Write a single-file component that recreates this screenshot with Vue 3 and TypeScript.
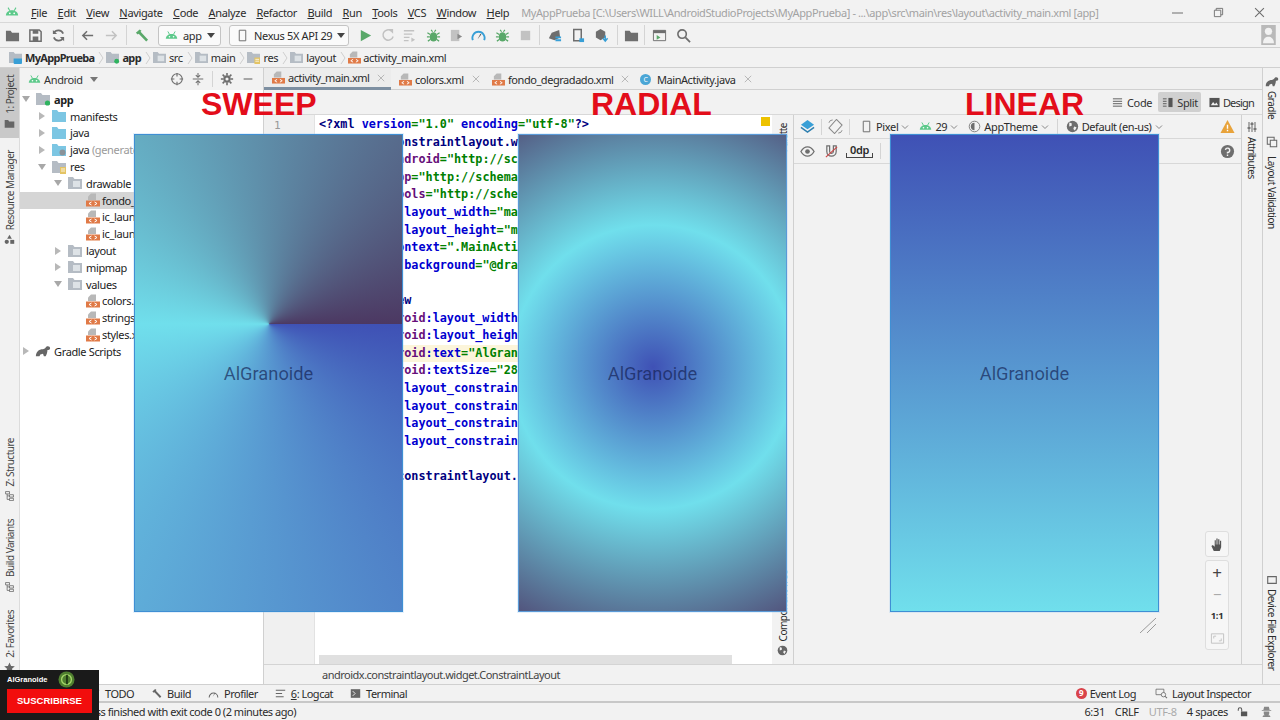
<script setup lang="ts">
type Seg = [string, string]
const menus = ['File','Edit','View','Navigate','Code','Analyze','Refactor','Build','Run','Tools','VCS','Window','Help']

const tb = [
  { i:'folder', c:'c-gray', w:23 }, { i:'save', c:'c-gray', w:23 }, { i:'sync', c:'c-gray', w:23 }, { sep:true, w:6 },
  { i:'left', c:'c-gray', w:23 }, { i:'right', c:'c-light', w:24 }, { sep:true, w:6 }, { i:'hammer', c:'c-green', w:24 },
]
const tb2 = [
  { i:'play', c:'c-green', w:22 }, { i:'rerun', c:'c-light', w:22 }, { i:'lines', c:'c-light', w:23 }, { i:'bug', c:'c-green', w:24 },
  { i:'attach', c:'c-light', w:22 }, { i:'gauge', c:'c-blue', w:23 }, { i:'bug', c:'c-green', w:24 }, { i:'stop', c:'c-light', w:22 },
  { sep:true, w:7 }, { i:'sdk', c:'c-gray', w:23 }, { i:'phone', c:'c-gray', w:23 }, { i:'box', c:'c-gray', w:25 },
  { sep:true, w:7 }, { i:'folder', c:'c-gray', w:20 }, { sep:true, w:7 }, { i:'terminal', c:'c-gray', w:22 }, { i:'search', c:'c-gray', w:26 },
]
const crumbs = [
  { t:'MyAppPrueba', b:true, ic:'proj' }, { t:'app', b:true, ic:'mod' }, { t:'src', b:false, ic:'gfold' },
  { t:'main', b:false, ic:'gfold' }, { t:'res', b:false, ic:'res' }, { t:'layout', b:false, ic:'gfold' },
]

const tabs = [
  { t:'activity_main.xml', w:127, act:true, ic:'xml' },
  { t:'colors.xml', w:93, act:false, ic:'xml' },
  { t:'fondo_degradado.xml', w:154, act:false, ic:'xml' },
  { t:'MainActivity.java', w:120, act:false, ic:'java' },
]

const tree = [
  { t:'app', lv:0, ar:'d', ic:'mod', b:true }, { t:'manifests', lv:1, ar:'r', ic:'fold' }, { t:'java', lv:1, ar:'r', ic:'fold' },
  { t:'java', note:' (generated)', lv:1, ar:'r', ic:'gen' }, { t:'res', lv:1, ar:'d', ic:'res' }, { t:'drawable', lv:2, ar:'d', ic:'gfold' },
  { t:'fondo_degradado.xml', lv:3, ic:'xml', sel:true }, { t:'ic_launcher_background.xml', lv:3, ic:'xml' }, { t:'ic_launcher_foreground.xml', lv:3, ic:'xml' },
  { t:'layout', lv:2, ar:'r', ic:'gfold' }, { t:'mipmap', lv:2, ar:'r', ic:'gfold' }, { t:'values', lv:2, ar:'d', ic:'gfold' },
  { t:'colors.xml', lv:3, ic:'xml' }, { t:'strings.xml', lv:3, ic:'xml' }, { t:'styles.xml', lv:3, ic:'xml' }, { t:'Gradle Scripts', lv:0, ar:'r', ic:'gradle' },
]

const T='t', A='a', P='p', S='s', X='x'
const attr = (ind: string, ns: string, name: string, val: string): Seg[] => [[ind,X],[ns,P],[':',A],[name,A],['=',S],['"'+val+'"',S]]
const full: Seg[][] = [
  [['<?',T],['xml ',T],['version',A],['=',S],['"1.0" ',S],['encoding',A],['=',S],['"utf-8"',S],['?>',T]],
  [['<androidx.constraintlayout.widget.ConstraintLayout',T]],
  [['    ',X],['xmlns',A],[':',A],['android',P],['=',S],['"http://schemas.android.com/apk/res/android"',S]],
  [['    ',X],['xmlns',A],[':',A],['app',P],['=',S],['"http://schemas.android.com/apk/res-auto"',S]],
  [['    ',X],['xmlns',A],[':',A],['tools',P],['=',S],['"http://schemas.android.com/tools"',S]],
  attr('    ','android','layout_width','match_parent'),
  attr('    ','android','layout_height','match_parent'),
  attr('    ','tools','context','.MainActivity'),
  attr('    ','android','background','@drawable/fondo_degradado'),
  [[' ',X]],
  [['    <TextView',T]],
  attr('        ','android','layout_width','wrap_content'),
  attr('        ','android','layout_height','wrap_content'),
  attr('        ','android','text','AlGranoide'),
  attr('        ','android','textSize','28sp'),
  attr('        ','app','layout_constraintBottom_toBottomOf','parent'),
  attr('        ','app','layout_constraintLeft_toLeftOf','parent'),
  attr('        ','app','layout_constraintRight_toRightOf','parent'),
  attr('        ','app','layout_constraintTop_toTopOf','parent'),
  [[' ',X]],
  [['</androidx.constraintlayout.widget.ConstraintLayout>',T]],
]
// Everything past column 28 sits behind the RADIAL preview, so it is not laid out.
const clip = (segs: Seg[], max = 28): Seg[] => {
  const out: Seg[] = []
  let left = max
  for (const [txt, k] of segs) {
    if (left <= 0) break
    out.push([txt.slice(0, left), k])
    left -= txt.length
  }
  return out
}
const code = full.map((segs, i) => ({ segs: i === 0 ? segs : clip(segs), hl: i === 13 }))

const leftTop = [
  { t:'1: Project', ic:'folder', act:true },
  { t:'Resource Manager', ic:'shapes' },
]
const leftBottom = [
  { t:'Z: Structure', ic:'tree' },
  { t:'Build Variants', ic:'tree' },
  { t:'2: Favorites', ic:'star' },
]
const phones = [
  { k:'sweep', label:'SWEEP' },
  { k:'radial', label:'RADIAL' },
  { k:'linear', label:'LINEAR' },
]
</script>

<template>
  <div class="ide">
    <svg class="sprite" aria-hidden="true">
      <defs>
        <symbol id="android" viewBox="0 0 16 16"><path d="M1 12c0-3.400 3-6 7-6s7 2.600 7 6z" fill="currentColor"/><path d="M3.500 3l2 3.500M12.500 3l-2 3.500" stroke="currentColor" stroke-width="1.200"/><circle cx="5.500" cy="9.500" r="1" fill="#fff"/><circle cx="10.500" cy="9.500" r="1" fill="#fff"/></symbol>
        <symbol id="folder" viewBox="0 0 16 16"><path d="M1 3h5l1.500 2H15v9H1z" fill="currentColor"/></symbol>
        <symbol id="save" viewBox="0 0 16 16"><path d="M2 2h10l2 2v10H2z" fill="none" stroke="currentColor" stroke-width="1.600"/><path d="M5 2h6v4H5zM5 9h6v5H5z" fill="currentColor"/></symbol>
        <symbol id="sync" viewBox="0 0 16 16"><path d="M13 6a5.500 5.500 0 0 0-10-.5M3 10a5.500 5.500 0 0 0 10 .5" fill="none" stroke="currentColor" stroke-width="1.800"/><path d="M2 2v4.500h4.500zM14 14V9.500H9.500z" fill="currentColor"/></symbol>
        <symbol id="left" viewBox="0 0 16 16"><path d="M14 8H3M7.500 3.500L3 8l4.500 4.500" fill="none" stroke="currentColor" stroke-width="1.600"/></symbol>
        <symbol id="right" viewBox="0 0 16 16"><path d="M2 8h11M8.500 3.500L13 8l-4.500 4.500" fill="none" stroke="currentColor" stroke-width="1.600"/></symbol>
        <symbol id="hammer" viewBox="0 0 16 16"><path d="M2 5l4-3.500 2 1.500-1 1 8 8.500-2 2-8-8.500-1 1z" fill="currentColor"/></symbol>
        <symbol id="play" viewBox="0 0 16 16"><path d="M3 2l11 6-11 6z" fill="currentColor"/></symbol>
        <symbol id="rerun" viewBox="0 0 16 16"><path d="M12 3a5.500 5.500 0 1 0 2 6" fill="none" stroke="currentColor" stroke-width="1.600"/><path d="M9 1h5v5z" fill="currentColor"/></symbol>
        <symbol id="lines" viewBox="0 0 16 16"><path d="M2 3h11M2 6.500h9M2 10h6M2 13.500h5" stroke="currentColor" stroke-width="1.500"/><path d="M10 10l4 2.500-4 2.500z" fill="currentColor"/></symbol>
        <symbol id="bug" viewBox="0 0 16 16"><ellipse cx="8" cy="9.500" rx="4" ry="5" fill="currentColor"/><path d="M1.500 5l3 2M14.500 5l-3 2M1 9.500h3M15 9.500h-3M2 14l3-2M14 14l-3-2M5.500 2l1.500 2M10.500 2L9 4" stroke="currentColor" stroke-width="1.300"/></symbol>
        <symbol id="attach" viewBox="0 0 16 16"><path d="M2 2h9v12H2z" fill="currentColor"/><path d="M9 6l5 3-5 3z" fill="#8a8a8a"/></symbol>
        <symbol id="gauge" viewBox="0 0 16 16"><path d="M2 13a6.500 6.500 0 1 1 12 0" fill="none" stroke="currentColor" stroke-width="2"/><path d="M7 12l3-6 1 1z" fill="#555"/></symbol>
        <symbol id="stop" viewBox="0 0 16 16"><path d="M3 3h10v10H3z" fill="currentColor"/></symbol>
        <symbol id="sdk" viewBox="0 0 16 16"><path d="M2 11l3-6 8-3 1 8-6 3z" fill="#6e6e6e"/><path d="M9 9h6v2H9zM9 12h6v2H9z" fill="#389fd6"/></symbol>
        <symbol id="phone" viewBox="0 0 16 16"><path d="M4 1.500h8v12H4z" fill="none" stroke="#6e6e6e" stroke-width="1.600"/><path d="M10 11h5v4h-5z" fill="#389fd6"/></symbol>
        <symbol id="box" viewBox="0 0 16 16"><path d="M2 4l5-3 5 3v6l-5 3-5-3z" fill="#6e6e6e"/><path d="M12 8v5M9.500 11l2.500 3 2.500-3" stroke="#389fd6" stroke-width="1.600" fill="none"/></symbol>
        <symbol id="terminal" viewBox="0 0 16 16"><path d="M1.500 2.500h13v11h-13z" fill="none" stroke="currentColor"/><path d="M1.500 2.500h13v3h-13z" fill="currentColor"/><path d="M5 7.500l4 2.500-4 2.500z" fill="#59a869"/></symbol>
        <symbol id="search" viewBox="0 0 16 16"><circle cx="6.500" cy="6.500" r="4.500" fill="none" stroke="currentColor" stroke-width="1.700"/><path d="M10 10l5 5" stroke="currentColor" stroke-width="1.900"/></symbol>
        <symbol id="x" viewBox="0 0 10 10"><path d="M1 1l8 8M9 1l-8 8" stroke="currentColor" stroke-width="1"/></symbol>
        <symbol id="chev" viewBox="0 0 8 8"><path d="M1 2.500l3 3 3-3" fill="none" stroke="currentColor" stroke-width="1"/></symbol>
        <symbol id="down" viewBox="0 0 8 8"><path d="M0 2h8L4 7z" fill="currentColor"/></symbol>
        <symbol id="xml" viewBox="0 0 14 14"><path d="M5 0.500h5v6.500H2V3.500z" fill="#b8b8b8"/><path d="M0 7.500h14v6H0z" fill="#e07a47"/><path d="M5.500 9L3 10.500 5.500 12M8.500 9l2.500 1.500L8.500 12" fill="none" stroke="#fff" stroke-width="1"/></symbol>
        <symbol id="fold" viewBox="0 0 16 14"><path d="M1 1h5l1.500 2H15v10H1z" fill="#7cc6e3"/></symbol>
        <symbol id="gfold" viewBox="0 0 16 14"><path d="M1 1h5l1.500 2H15v10H1z" fill="#b5bcc4"/><path d="M6 5h7v6H6z" fill="#dde2e6"/></symbol>
        <symbol id="proj" viewBox="0 0 16 14"><path d="M1 1h5l1.500 2H15v10H1z" fill="#b5bcc4"/><path d="M6 8h9v5a1 1 0 0 1-1 1H7a1 1 0 0 1-1-1z" fill="#389fd6"/></symbol>
        <symbol id="mod" viewBox="0 0 16 14"><path d="M1 1h5l1.500 2H15v10H1z" fill="#b5bcc4"/><circle cx="12.500" cy="11" r="2.600" fill="#2fb35f"/></symbol>
        <symbol id="gen" viewBox="0 0 16 14"><path d="M1 1h5l1.500 2H15v10H1z" fill="#7cc6e3"/><circle cx="11.500" cy="9.500" r="3" fill="#8a9399"/></symbol>
        <symbol id="res" viewBox="0 0 16 14"><path d="M1 1h5l1.500 2H15v10H1z" fill="#b5bcc4"/><path d="M9 7h6v7H9z" fill="#e4c464"/><path d="M10 9h4M10 11h4" stroke="#fff" stroke-width=".8"/></symbol>
        <symbol id="gradle" viewBox="0 0 18 14"><path d="M1 13c0-5 3-8 8-8 2 0 3-2 4-3 2-1 4 0 4 2s-2 2-3 2c0 3-1 5-2 7h-2l-1-3-3 1-1 2H3z" fill="currentColor"/></symbol>
        <symbol id="layers" viewBox="0 0 16 16"><path d="M8 1l7 5-7 5-7-5z" fill="#389fd6"/><path d="M1 9l7 5 7-5" fill="none" stroke="#2f80b0" stroke-width="1.700"/></symbol>
        <symbol id="rotate" viewBox="0 0 16 16"><path d="M9 .500l6 6-8 9-6-6z" fill="none" stroke="#888" stroke-width="1.100"/><path d="M1 4a4 4 0 0 1 4-3M15 12a4 4 0 0 1-4 3" fill="none" stroke="#888"/></symbol>
        <symbol id="dev" viewBox="0 0 16 16"><path d="M4 1.500h8v13H4z" fill="none" stroke="currentColor" stroke-width="1.200"/></symbol>
        <symbol id="theme" viewBox="0 0 16 16"><circle cx="8" cy="8" r="6.500" fill="none" stroke="currentColor"/><path d="M8 3.500a4.500 4.500 0 0 0 0 9z" fill="currentColor"/></symbol>
        <symbol id="globe" viewBox="0 0 16 16"><circle cx="8" cy="8" r="7" fill="currentColor"/><path d="M4 3l3 1 0 3-3 1zM10 8l3 1-2 4-2-2z" fill="#f2f2f2"/></symbol>
        <symbol id="warn" viewBox="0 0 16 16"><path d="M8 1l7.500 14H.500z" fill="#e8a33b"/><path d="M8 6v4.500M8 11.500v1.500" stroke="#fff" stroke-width="1.500"/></symbol>
        <symbol id="eye" viewBox="0 0 16 16"><path d="M1 8c2-3.500 4.500-5 7-5s5 1.500 7 5c-2 3.500-4.500 5-7 5s-5-1.500-7-5z" fill="none" stroke="currentColor" stroke-width="1.400"/><circle cx="8" cy="8" r="2.500" fill="currentColor"/></symbol>
        <symbol id="magnet" viewBox="0 0 16 16"><path d="M3 2v6a5 5 0 0 0 10 0V2h-3v6a2 2 0 0 1-4 0V2z" fill="none" stroke="currentColor" stroke-width="1.300"/><path d="M2 14L14 3" stroke="#c44" stroke-width="1.200"/></symbol>
        <symbol id="help" viewBox="0 0 16 16"><circle cx="8" cy="8" r="7" fill="currentColor"/><path d="M5.800 6.200A2.300 2.300 0 1 1 8 9v1M8 11.200v1.600" fill="none" stroke="#f2f2f2" stroke-width="1.500"/></symbol>
        <symbol id="hand" viewBox="0 0 16 16"><path d="M4 15L1.500 9.500l1.500-1 2 2V3.500h1.200V8h.6V1.500h1.300V8h.6V2.500h1.300V8h.6V4h1.300v7l-1.500 4z" fill="currentColor"/></symbol>
        <symbol id="fit" viewBox="0 0 16 16"><path d="M1.500 3h13v10h-13z" fill="none" stroke="currentColor"/><path d="M4 8V5.500h2.500M12 8v2.500H9.500" fill="none" stroke="currentColor"/></symbol>
        <symbol id="hlines" viewBox="0 0 12 12"><path d="M1 2h10M1 4.700h10M1 7.300h10M1 10h10" stroke="currentColor" stroke-width="1"/></symbol>
        <symbol id="split" viewBox="0 0 12 12"><path d="M1 2h4M1 4.700h4M1 7.300h4M1 10h4" stroke="currentColor" stroke-width="1"/><path d="M7 1h4.500v10H7z" fill="currentColor"/></symbol>
        <symbol id="image" viewBox="0 0 12 12"><path d="M.5 1h11v10H.5z" fill="currentColor"/><path d="M2 9l2.500-3.500L6.500 8 8 6l2 3z" fill="#f2f2f2"/></symbol>
        <symbol id="sliders" viewBox="0 0 12 12"><path d="M3 1v10M6 1v10M9 1v10" stroke="currentColor"/><path d="M1.500 7h3M4.500 3h3M7.500 8h3" stroke="currentColor" stroke-width="1.600"/></symbol>
        <symbol id="valid" viewBox="0 0 14 14"><path d="M1.500 1.500h8v8h-8z" fill="none" stroke="currentColor" stroke-width="1.200"/><path d="M5 5h7.500v7.500H5z" fill="#f2f2f2" stroke="currentColor" stroke-width="1.200"/></symbol>
        <symbol id="devf" viewBox="0 0 14 14"><path d="M2 3h10v8H2z" fill="none" stroke="currentColor" stroke-width="1.300"/></symbol>
        <symbol id="shapes" viewBox="0 0 14 14"><path d="M7 1l3 5H4z" fill="currentColor"/><circle cx="3.500" cy="10" r="2.700" fill="currentColor"/><path d="M8 7.500h5v5H8z" fill="currentColor"/></symbol>
        <symbol id="tree" viewBox="0 0 14 14"><path d="M2 2h5v3H2zM7 6h5v3H7zM7 10.500h5v3H7zM4 5v7h3M4 7.500h3" fill="none" stroke="currentColor"/></symbol>
        <symbol id="star" viewBox="0 0 14 14"><path d="M7 0.500l2 4.500 4.800.5-3.600 3.200 1 4.800L7 11l-4.200 2.500 1-4.800L.2 5.500 5 5z" fill="currentColor"/></symbol>
        <symbol id="prof" viewBox="0 0 14 14"><path d="M1.500 12a5.500 5.500 0 1 1 11 0" fill="none" stroke="currentColor" stroke-width="1.300"/><path d="M6 11l2.500-5 .8.800z" fill="currentColor"/></symbol>
        <symbol id="logcat" viewBox="0 0 14 14"><path d="M1 3h12M1 7h8M1 11h10" stroke="currentColor" stroke-width="1.300"/></symbol>
        <symbol id="term" viewBox="0 0 14 14"><path d="M1 1.500h12v11H1z" fill="currentColor"/><path d="M3.500 4l3 3-3 3" fill="none" stroke="#f2f2f2" stroke-width="1.200"/></symbol>
        <symbol id="insp" viewBox="0 0 16 14"><path d="M1 1.500h10v7H1z" fill="none" stroke="currentColor"/><circle cx="10.500" cy="8.500" r="2.800" fill="#f2f2f2" stroke="currentColor"/><path d="M12.500 10.500l2.500 2.500" stroke="currentColor" stroke-width="1.300"/></symbol>
        <symbol id="lock" viewBox="0 0 14 14"><path d="M5 13h8V7H5z" fill="currentColor"/><path d="M6 7V4.500a2.200 2.200 0 0 0-4.400 0V6" fill="none" stroke="currentColor" stroke-width="1.300"/></symbol>
        <symbol id="hat" viewBox="0 0 14 14"><path d="M3 5l1-4h6l1 4h2v1H1V5z" fill="currentColor"/><path d="M3.500 7h7v2a3 3 0 0 1-7 0zM2 14c0-2 2-3 5-3s5 1 5 3z" fill="currentColor"/></symbol>
        <symbol id="restore" viewBox="0 0 12 12"><path d="M1.500 3.500h7v7h-7zM3.500 3.500v-2h7v7h-2" fill="none" stroke="currentColor"/></symbol>
        <symbol id="user" viewBox="0 0 16 22"><path d="M0 0h16v22H0z" fill="#b9b9b9"/><circle cx="8" cy="7" r="4" fill="#f2f2f2"/><path d="M2 20c0-5 3-7 6-7s6 2 6 7z" fill="#f2f2f2"/></symbol>
      </defs>
    </svg>

    <header class="titlebar">
      <svg class="ic ic-android c-android"><use href="#android"/></svg>
      <nav class="menus"><span v-for="m in menus" :key="m" class="menu"><u>{{ m[0] }}</u>{{ m.slice(1) }}</span></nav>
      <span class="wintitle">MyAppPrueba [C:\Users\WILL\AndroidStudioProjects\MyAppPrueba] - ...\app\src\main\res\layout\activity_main.xml [app]</span>
      <span class="winctl">
        <svg class="ctl c-gray"><path d="M0 6h11" stroke="currentColor"/></svg>
        <svg class="ctl c-gray"><use href="#restore"/></svg>
        <svg class="ctl c-gray"><use href="#x"/></svg>
      </span>
    </header>

    <div class="toolbar">
      <template v-for="(b,i) in tb" :key="i">
        <span class="tcell" :style="{ width: b.w + 'px' }">
          <i v-if="b.sep" class="vsep"></i>
          <svg v-else class="ic" :class="b.c"><use :href="'#' + b.i"/></svg>
        </span>
      </template>
      <span class="combo combo-app"><svg class="ic-sm c-android"><use href="#android"/></svg><span>app</span><svg class="tri"><use href="#down"/></svg></span>
      <span class="combo combo-dev"><svg class="ic-sm c-gray"><use href="#dev"/></svg><span>Nexus 5X API 29</span><svg class="tri"><use href="#down"/></svg></span>
      <span class="tb2">
        <span v-for="(b,i) in tb2" :key="i" class="tcell" :style="{ width: b.w + 'px' }">
          <i v-if="b.sep" class="vsep"></i>
          <svg v-else class="ic" :class="b.c"><use :href="'#' + b.i"/></svg>
        </span>
      </span>
      <svg class="avatar"><use href="#user"/></svg>
    </div>

    <div class="navbar">
      <span v-for="c in crumbs" :key="c.t" class="crumb">
        <svg class="crumb-i"><use :href="'#' + c.ic"/></svg>
        <b v-if="c.b">{{ c.t }}</b><span v-else>{{ c.t }}</span>
        <svg class="crumb-sep" viewBox="0 0 6 14"><path d="M1 1l4 6-4 6" fill="none" stroke="#cfcfcf"/></svg>
      </span>
      <span class="crumb"><svg class="crumb-x"><use href="#xml"/></svg><span>activity_main.xml</span></span>
    </div>

    <div class="main">
      <aside class="lstrip">
        <div class="lgroup">
          <div v-for="l in leftTop" :key="l.t" class="vtab" :class="{ act: l.act, rm: !l.act }">
            <svg class="vic"><use :href="'#' + l.ic"/></svg><span class="vt-up">{{ l.t }}</span>
          </div>
        </div>
        <div class="lgroup lg2">
          <div v-for="l in leftBottom" :key="l.t" class="vtab">
            <svg class="vic"><use :href="'#' + l.ic"/></svg><span class="vt-up">{{ l.t }}</span>
          </div>
        </div>
      </aside>

      <section class="project">
        <div class="phead">
          <svg class="ic-sm c-android"><use href="#android"/></svg>
          <span class="ptitle">Android</span>
          <svg class="tri tri-g"><use href="#down"/></svg>
          <span class="pspacer"></span>
          <svg class="ic-h c-gray" viewBox="0 0 16 16"><circle cx="8" cy="8" r="6" fill="none" stroke="currentColor" stroke-width="1.300"/><path d="M8 1v4M8 11v4M1 8h4M11 8h4" stroke="currentColor" stroke-width="1.300"/></svg>
          <svg class="ic-h c-gray" viewBox="0 0 16 16"><path d="M2 8h12M8 1v4M5.500 3.500L8 6l2.500-2.500M8 15v-4M5.500 12.500L8 10l2.500 2.500" fill="none" stroke="currentColor" stroke-width="1.200"/></svg>
          <i class="vsep psep"></i>
          <svg class="ic-h c-gray" viewBox="0 0 16 16"><circle cx="8" cy="8" r="3" fill="none" stroke="currentColor" stroke-width="2.400"/><path d="M8 1v3M8 12v3M1 8h3M12 8h3M3 3l2 2M11 11l2 2M13 3l-2 2M5 11l-2 2" stroke="currentColor" stroke-width="1.800"/></svg>
          <svg class="ic-h c-gray" viewBox="0 0 16 16"><path d="M3 8h10" stroke="currentColor" stroke-width="1.300"/></svg>
        </div>
        <ul class="tree">
          <li v-for="n in tree" :key="n.t + n.ic + n.lv + (n.note || '')" class="row" :class="['lv' + n.lv, { sel: n.sel }]">
            <svg v-if="n.ar" class="arrow" viewBox="0 0 8 8"><path v-if="n.ar === 'd'" d="M0 1h8L4 7z" fill="#a8a8a8"/><path v-else d="M1 0v8l6-4z" fill="#b8b8b8"/></svg>
            <span v-else class="arrow"></span>
            <svg class="tic"><use :href="'#' + n.ic"/></svg>
            <span :class="{ bold: n.b }">{{ n.t }}<span v-if="n.note" class="note">{{ n.note }}</span></span>
          </li>
        </ul>
      </section>

      <section class="center">
        <div class="tabs">
          <div v-for="t in tabs" :key="t.t" class="tab" :class="{ act: t.act, jv: t.ic === 'java' }" :style="{ width: t.w + 'px' }">
            <svg v-if="t.ic === 'xml'" class="tabic"><use href="#xml"/></svg>
            <span v-else class="cfile">C</span>
            <span class="tabt">{{ t.t }}</span>
            <svg class="tabx"><use href="#x"/></svg>
          </div>
        </div>
        <div class="modes">
          <span class="mode"><svg class="m-ic"><use href="#hlines"/></svg>Code</span>
          <span class="mode on"><svg class="m-ic"><use href="#split"/></svg>Split</span>
          <span class="mode m-design"><svg class="m-ic"><use href="#image"/></svg>Design</span>
        </div>
        <div class="body">
          <div class="editor">
            <div class="gutter"><span>1</span></div>
            <div class="codewrap">
              <pre class="code"><div v-for="(l,i) in code" :key="i" class="cl" :class="{ hl: l.hl }"><span v-for="(s,j) in l.segs" :key="j" :class="'k-' + s[1]">{{ s[0] }}</span></div></pre>
              <i class="marker"></i>
              <i class="hscroll"></i>
            </div>
          </div>
          <div class="midstrip">
            <span class="vt-up palette">Palette</span>
            <span class="compwrap"><svg class="vic"><use href="#globe"/></svg><span class="vt-up">Component Tree</span></span>
          </div>
          <div class="design">
            <div class="dbar">
              <svg class="ic dl"><use href="#layers"/></svg>
              <i class="vsep s1"></i>
              <svg class="ic dr"><use href="#rotate"/></svg>
              <i class="vsep s1"></i>
              <span class="dd d-pixel"><svg class="ic-sm c-gray"><use href="#dev"/></svg>Pixel<svg class="ch"><use href="#chev"/></svg></span>
              <span class="dd d-api"><svg class="ic-sm c-android"><use href="#android"/></svg>29<svg class="ch"><use href="#chev"/></svg></span>
              <span class="dd d-theme"><svg class="ic-sm c-gray"><use href="#theme"/></svg>AppTheme<svg class="ch"><use href="#chev"/></svg></span>
              <i class="vsep s2"></i>
              <span class="dd d-loc"><svg class="ic-sm c-gray"><use href="#globe"/></svg>Default (en-us)<svg class="ch"><use href="#chev"/></svg></span>
              <span class="pspacer"></span>
              <svg class="ic wn"><use href="#warn"/></svg>
            </div>
            <div class="dbar d2">
              <svg class="ic ey c-gray"><use href="#eye"/></svg>
              <svg class="ic mg c-gray"><use href="#magnet"/></svg>
              <span class="odp">0dp</span>
              <i class="vsep s3"></i>
              <span class="pspacer"></span>
              <svg class="ic wn c-gray"><use href="#help"/></svg>
            </div>
            <div class="canvas">
              <div class="ctrls">
                <span class="cbtn"><svg class="ic c-dark"><use href="#hand"/></svg></span>
                <div class="cpanel">
                  <span class="plus">+</span>
                  <span class="minus">−</span>
                  <span class="one">1:1</span>
                  <span class="fitc"><svg class="ic c-light"><use href="#fit"/></svg></span>
                </div>
              </div>
              <svg class="resize" viewBox="0 0 16 15"><path d="M0 15L16 0M7 15L16 6" stroke="#9a9a9a" fill="none"/></svg>
            </div>
          </div>
          <div class="attrstrip">
            <svg class="vic dn"><use href="#sliders"/></svg><span class="vt-dn">Attributes</span>
          </div>
        </div>
        <div class="pathbar">androidx.constraintlayout.widget.ConstraintLayout</div>
      </section>

      <aside class="rstrip">
        <div class="rtab r1"><svg class="rgr"><use href="#gradle"/></svg><span class="vt-dn">Gradle</span></div>
        <div class="rtab r2"><svg class="vic dn"><use href="#valid"/></svg><span class="vt-dn">Layout Validation</span></div>
        <span class="pspacer"></span>
        <div class="rtab r3"><svg class="vic dn"><use href="#devf"/></svg><span class="vt-dn">Device File Explorer</span></div>
      </aside>
    </div>

    <div class="tools">
      <span class="tool"><svg class="b-ic"><use href="#logcat"/></svg>TODO</span>
      <span class="tool mt"><svg class="b-ic"><use href="#hammer"/></svg>Build</span>
      <span class="tool mt"><svg class="b-ic"><use href="#prof"/></svg>Profiler</span>
      <span class="tool mt"><svg class="b-ic"><use href="#logcat"/></svg><span><u>6</u>: Logcat</span></span>
      <span class="tool mt"><svg class="b-ic"><use href="#term"/></svg>Terminal</span>
      <span class="pspacer"></span>
      <span class="tool t-ev"><span class="badge">9</span>Event Log</span>
      <span class="tool t-li"><svg class="b-ic li"><use href="#insp"/></svg>Layout Inspector</span>
    </div>

    <footer class="status">
      <span class="msg">Process finished with exit code 0 (2 minutes ago)</span>
      <span class="pspacer"></span>
      <span class="s-pos">6:31</span>
      <span class="s-crlf">CRLF</span>
      <span class="s-utf">UTF-8</span>
      <span class="s-sp">4 spaces</span>
      <svg class="s-ic"><use href="#lock"/></svg>
      <svg class="s-ic s-hat"><use href="#hat"/></svg>
    </footer>

    <!-- video overlay: three gradient previews pasted over the IDE -->
    <div v-for="p in phones" :key="p.k" class="shot" :class="p.k">
      <span>AlGranoide</span>
    </div>
    <strong v-for="p in phones" :key="p.label" class="lbl" :class="'l-' + p.k">{{ p.label }}</strong>

    <aside class="sub">
      <div class="subtop">
        <span>AlGranoide</span>
        <svg class="sublogo" viewBox="0 0 18 18"><circle cx="9" cy="9" r="8.500" fill="#4f7f2f"/><circle cx="9" cy="9" r="5.200" fill="none" stroke="#a6d86a" stroke-width="1.400"/><path d="M9.500 4v10" stroke="#1c3310" stroke-width="1.800"/></svg>
      </div>
      <div class="subbtn">SUSCRIBIRSE</div>
    </aside>
  </div>
</template>

<style>
html, body { margin: 0; background: #f2f2f2; }
</style>

<style scoped>
.ide {
  position: relative; width: 1280px; height: 720px; overflow: hidden; display: flex; flex-direction: column;
  background: #f2f2f2; color: #2b2b2b; font-family: "Noto Sans", "Open Sans", sans-serif; font-size: 11px; line-height: 1; letter-spacing: -0.35px;
}
.sprite { position: absolute; width: 0; height: 0; }
svg { display: block; flex: none; }
.ic { width: 15px; height: 15px; }
.ic-sm { width: 13px; height: 13px; }
.ic-h { width: 14px; height: 14px; }
.c-gray { color: #6e6e6e; } .c-light { color: #c2c2c2; } .c-green { color: #59a869; } .c-blue { color: #389fd6; }
.c-android { color: #5cc98a; } .c-dark { color: #555; }
.pspacer { flex: 1; }
.vsep { display: block; width: 1px; height: 20px; background: #d4d4d4; flex: none; }

.titlebar { border-bottom: 1px solid #d8d8d8; display: flex; align-items: center; flex: none; padding: 2px 0 0 5px; height: 20px; }
.ic-android { width: 14px; height: 14px; }
.menus { display: flex; gap: 10.400px; margin-left: 12px; }
.menu u { text-underline-offset: 1px; }
.wintitle { margin-left: 12px; color: #a2a2a2; white-space: nowrap; letter-spacing: -0.4px; }
.winctl { margin-left: auto; display: flex; gap: 30px; padding-right: 15px; }
.ctl { width: 11px; height: 11px; }

.toolbar { height: 24px; border-bottom: 1px solid #d0d0d0; display: flex; align-items: center; padding-left: 1px; flex: none; position: relative; }
.tcell { display: flex; align-items: center; justify-content: center; flex: none; height: 24px; }
.combo { height: 21px; box-sizing: border-box; background: #fafafa; border: 1px solid #c4c4c4; border-radius: 3px; display: flex; align-items: center; flex: none; gap: 5px; padding: 0 6px; font-size: 11px; white-space: nowrap; }
.combo-app { width: 63px; margin-left: 5px; }
.combo-dev { width: 120px; margin-left: 8px; }
.tri { width: 8px; height: 8px; color: #444; margin-left: auto; }
.tb2 { display: flex; margin-left: 5px; align-items: center; }
.avatar { position: absolute; right: 4px; top: 2px; width: 15px; height: 20px; }

.navbar { height: 19px; border-bottom: 1px solid #d0d0d0; display: flex; align-items: center; flex: none; padding-left: 8px; }
.crumb { display: flex; align-items: center; gap: 2px; flex: none; }
.crumb b { font-weight: 700; letter-spacing: -0.7px; }
.crumb-i { width: 15px; height: 13px; }
.crumb-x { width: 13px; height: 13px; margin-left: 1px; }
.crumb-sep { width: 6px; height: 14px; margin: 0 1px 0 2px; }

.main { flex: 1; min-height: 0; display: flex; }
.lstrip { width: 20px; flex: none; display: flex; flex-direction: column; justify-content: space-between; border-right: 1px solid #dcdcdc; box-sizing: border-box; }
.lgroup { display: flex; flex-direction: column; }
.lg2 { gap: 18px; padding-bottom: 11px; }
.vtab { display: flex; flex-direction: column-reverse; align-items: center; gap: 4px; color: #444; }
.vtab.act { background: #c9c9c9; padding-bottom: 9px; height: 70px; box-sizing: border-box; justify-content: flex-start; }
.vtab.rm { margin-top: 12px; }
.vic { width: 11px; height: 11px; color: #666; }
.vic.dn { width: 12px; height: 12px; }
.vt-up { writing-mode: vertical-rl; transform: rotate(180deg); white-space: nowrap; font-size: 10px; letter-spacing: -0.5px; }
.vt-dn { writing-mode: vertical-rl; white-space: nowrap; font-size: 10px; letter-spacing: -0.5px; }

.project { width: 243px; flex: none; display: flex; flex-direction: column; background: #fff; }
.phead { height: 22px; background: #f2f2f2; display: flex; align-items: center; padding: 0 8px; flex: none; box-sizing: border-box; }
.ptitle { margin-left: 3px; color: #333; }
.tri-g { color: #777; margin-left: 7px; }
.phead .ic-h { margin-left: 7px; }
.phead .ic-h:first-of-type { margin-left: 9px; }
.phead .psep { margin: 0 0 0 7px; height: 16px; }
.tree { list-style: none; margin: 1px 0 0; padding: 0; }
.row { height: 16.800px; display: flex; align-items: center; white-space: nowrap; overflow: hidden; color: #222; }
.row.sel { background: #d5d5d5; }
.arrow { width: 8px; height: 8px; margin-right: 5px; flex: none; display: block; }
.lv0 { padding-left: 2px; } .lv1 { padding-left: 18px; } .lv2 { padding-left: 34px; } .lv3 { padding-left: 53px; }
.tic { width: 16px; height: 14px; margin-right: 3px; color: #666; }
.lv3 .tic { width: 14px; margin-right: 2px; }
.bold { font-weight: 700; }
.note { color: #9a9a9a; }

.center { flex: 1; min-width: 0; display: flex; flex-direction: column; border-left: 1px solid #d0d0d0; box-sizing: border-box; }
.tabs { height: 22px; display: flex; flex: none; background: #f0f0f0; border-bottom: 1px solid #d0d0d0; box-sizing: border-box; }
.tab { display: flex; align-items: center; padding-left: 8px; flex: none; box-sizing: border-box; position: relative; height: 22px; }
.tab.act { border-bottom: 3px solid #7d8fa1; background: #ececec; }
.tab.jv { padding-left: 2px; }
.tabic { width: 13px; height: 13px; margin-right: 3px; }
.tabt { letter-spacing: -0.45px; }
.cfile { width: 11px; height: 11px; border-radius: 50%; background: #4aa6d6; color: #fff; font-size: 7px; display: flex; align-items: center; justify-content: center; margin-right: 6px; flex: none; }
.tabx { width: 8px; height: 8px; color: #aaa; margin-left: 8px; }
.modes { height: 24px; flex: none; display: flex; align-items: center; justify-content: flex-end; padding-right: 4px; gap: 3px; }
.mode { display: flex; align-items: center; gap: 4px; height: 20px; padding: 0 4px; color: #333; }
.mode.on { background: #d0d0d0; border-radius: 2px; margin: 0 1px 0 -1px; padding: 0 3px 0 4px; }
.m-design { gap: 3px; letter-spacing: -0.8px; }
.m-ic { width: 11px; height: 11px; color: #555; }

.body { flex: 1; min-height: 0; display: flex; border-top: 1px solid #d8d8d8; box-sizing: border-box; border-bottom: 1px solid #d4d4d4; }
.editor { width: 508px; flex: none; display: flex; overflow: hidden; }
.gutter { width: 50px; flex: none; background: #f0f0f0; border-right: 1px solid #e2e2e2; color: #999; font: 11px "DejaVu Sans Mono", monospace; letter-spacing: 0; }
.gutter span { display: block; margin: 4px 0 0 10px; }
.codewrap { flex: 1; background: #fff; position: relative; overflow: hidden; padding: 1px 0 0 4px; }
.code { margin: 0; font: 11.800px/17.600px "DejaVu Sans Mono", monospace; white-space: pre; color: #000; letter-spacing: 0; }
.cl { height: 17.600px; margin-left: -4px; padding-left: 4px; }
.hl { background: #fcf5da; }
.k-t { color: #000080; font-weight: 700; }
.k-a { color: #0000d0; font-weight: 700; }
.k-p { color: #660e7a; font-weight: 700; }
.k-s { color: #008000; font-weight: 700; }
.marker { position: absolute; right: 2px; top: 2px; width: 9px; height: 9px; background: #edc200; }
.hscroll { position: absolute; left: 4px; right: 40px; bottom: 0; height: 9px; background: #e0e0e0; }
.midstrip { width: 22px; flex: none; display: flex; flex-direction: column; justify-content: space-between; align-items: center; border-right: 1px solid #d0d0d0; box-sizing: border-box; padding: 8px 0; }
.compwrap { display: flex; flex-direction: column-reverse; align-items: center; gap: 4px; justify-content: flex-start; }
.design { flex: 1; min-width: 0; display: flex; flex-direction: column; }
.dbar { height: 24px; flex: none; display: flex; align-items: center; border-bottom: 1px solid #d8d8d8; box-sizing: border-box; position: relative; white-space: nowrap; }
.dl { margin: 0 6px; }
.dr { margin: 0 6px; }
.s1 { height: 16px; }
.dd { display: flex; align-items: center; gap: 3px; }
.d-pixel { margin-left: 10px; } .d-api { margin-left: 10px; } .d-theme { margin-left: 10px; }
.s2 { height: 16px; margin-left: 8px; }
.d-loc { margin-left: 8px; letter-spacing: -0.4px; }
.ch { width: 8px; height: 8px; color: #888; }
.wn { margin-right: 6px; }
.d2 { height: 25px; }
.ey { margin-left: 6px; }
.mg { margin-left: 9px; }
.odp { margin-left: 7px; font-weight: 600; border-bottom: 1px solid #444; padding: 0 4px 2px; position: relative; }
.odp::before, .odp::after { content: ""; position: absolute; bottom: 0; width: 1px; height: 4px; background: #444; }
.odp::before { left: 0; } .odp::after { right: 0; }
.s3 { height: 16px; margin-left: 7px; }
.canvas { flex: 1; position: relative; display: flex; justify-content: flex-end; align-items: flex-end; padding: 0 12px 14px 0; }
.ctrls { display: flex; flex-direction: column; gap: 3px; }
.cbtn, .cpanel { width: 24px; box-sizing: border-box; border: 1px solid #dedede; border-radius: 3px; background: #f6f6f6; display: flex; flex-direction: column; align-items: center; }
.cbtn { height: 26px; justify-content: center; }
.cpanel { height: 90px; }
.plus, .minus, .one, .fitc { height: 22px; display: flex; align-items: center; justify-content: center; flex: none; }
.plus { font-size: 17px; color: #444; }
.minus { font-size: 15px; color: #aaa; }
.one { font-weight: 700; font-size: 9.500px; color: #333; }
.resize { position: absolute; right: 85px; bottom: 31px; width: 16px; height: 15px; }
.attrstrip { width: 21px; flex: none; display: flex; flex-direction: column; align-items: center; gap: 4px; padding-top: 6px; border-left: 1px solid #d0d0d0; box-sizing: border-box; }
.pathbar { height: 19px; flex: none; display: flex; align-items: center; padding-left: 58px; color: #444; letter-spacing: -0.5px; }
.rstrip { width: 18px; flex: none; display: flex; flex-direction: column; align-items: center; padding: 8px 0 14px; border-left: 1px solid #d0d0d0; box-sizing: border-box; }
.rtab { display: flex; flex-direction: column; align-items: center; gap: 4px; }
.r2 { margin-top: 17px; gap: 8px; }
.r3 { gap: 3px; }
.rgr { width: 14px; height: 11px; color: #666; }

.tools { height: 16px; flex: none; display: flex; align-items: center; border-top: 1px solid #d0d0d0; border-bottom: 2px solid #c8c8c8; padding-left: 89px; letter-spacing: -0.5px; }
.tool { display: flex; align-items: center; gap: 5px; flex: none; }
.mt { margin-left: 17px; }
.b-ic { width: 11px; height: 11px; color: #666; }
.badge { width: 11px; height: 11px; border-radius: 50%; background: #d9434a; color: #fff; font-size: 8px; font-weight: 700; display: flex; align-items: center; justify-content: center; margin-right: -2px; letter-spacing: 0; }
.t-li { margin: 0 29px 0 19px; gap: 4px; }
.li { width: 13px; }

.status { flex: none; height: 17px; display: flex; align-items: center; padding: 0 8px 0 69px; }
.msg { letter-spacing: -0.48px; }
.s-pos { margin-right: 10px; } .s-crlf { margin-right: 10px; } .s-utf { color: #aaa; margin-right: 10px; }
.s-sp { margin-right: 9px; }
.s-ic { width: 11px; height: 11px; color: #555; }
.s-hat { margin-left: 13px; color: #888; }

/* overlay: pasted gradient previews and video labels */
.shot { position: absolute; top: 134px; width: 269px; height: 478px; box-sizing: border-box; border: 1px solid #3f8fd4; display: flex; justify-content: center; color: rgba(18, 30, 80, .66); font: 18.300px "Roboto", sans-serif; letter-spacing: 0; box-shadow: 0 0 0 1px rgba(150, 200, 240, .25); }
.shot span { margin-top: 228px; }
.sweep { left: 134px; background: conic-gradient(from 90deg at 134px 189px, #3f51b5 0, #70dfec 50%, #4c3862 100%); }
.radial { left: 518px; background: radial-gradient(circle at 134px 232px, #3f51b5 0, #70dfec 142px, #4a3060 315px); border-color: #5a9ad8; }
.linear { left: 890px; background: linear-gradient(#3f51b5, #70dfec); }
.lbl { position: absolute; top: 91px; color: #e30d1a; font: 700 32px/26px "Liberation Sans", sans-serif; letter-spacing: 0; }
.l-sweep { left: 201px; } .l-radial { left: 591px; } .l-linear { left: 965px; }

.sub { position: absolute; left: 0; top: 670px; width: 99px; height: 50px; box-sizing: border-box; background: #1a1a1a; padding: 0 7px; display: flex; flex-direction: column; letter-spacing: 0; }
.subtop { height: 19px; display: flex; align-items: center; color: #fff; font: 700 7.500px "Liberation Sans", sans-serif; }
.sublogo { width: 17px; height: 17px; margin-left: 11px; }
.subbtn { width: 85px; height: 24px; background: #f20d0d; color: #fff; font: 700 9.500px/24px "Liberation Sans", sans-serif; text-align: center; }
</style>
